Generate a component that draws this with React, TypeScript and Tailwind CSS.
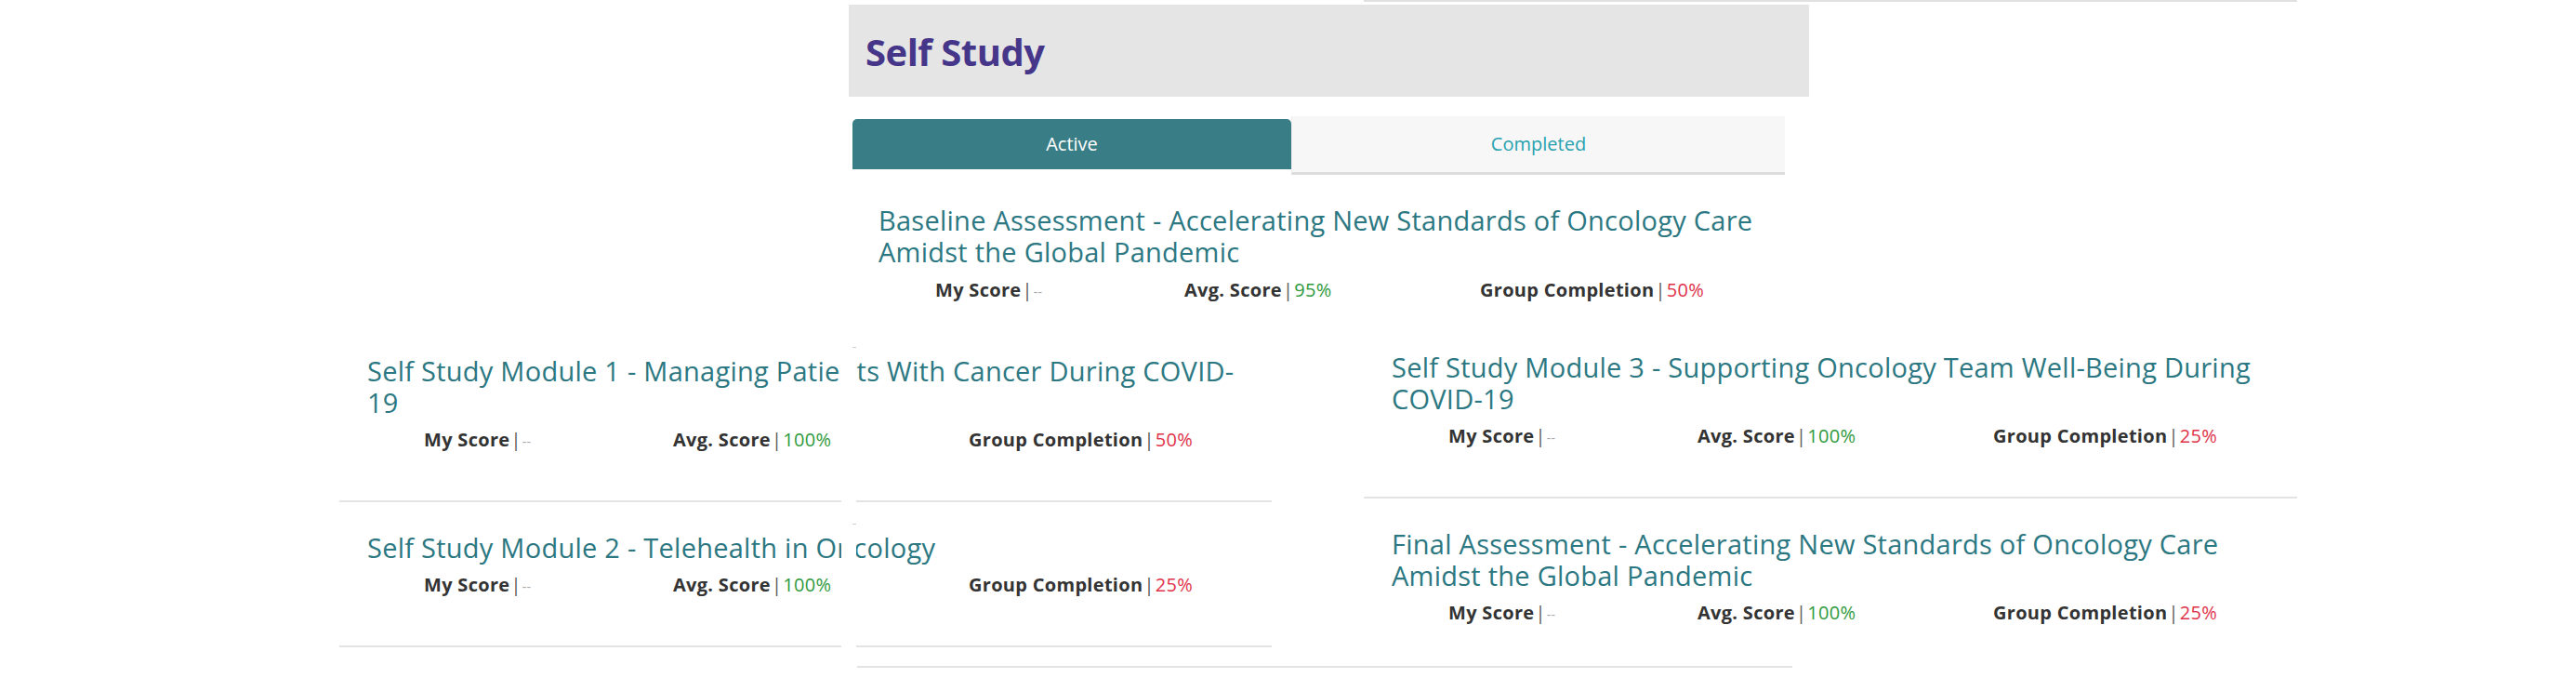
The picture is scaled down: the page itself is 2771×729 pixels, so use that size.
import React from "react";

type Stat = { my: string; avg: string; group: string };

type Course = { lines: string[]; stats: Stat };

const baseline: Course = {
  lines: ["Baseline Assessment - Accelerating New Standards of Oncology Care", "Amidst the Global Pandemic"],
  stats: { my: "--", avg: "95%", group: "50%" },
};

const leftCourses: Course[] = [
  {
    lines: ["Self Study Module 1 - Managing Patients With Cancer During COVID-", "19"],
    stats: { my: "--", avg: "100%", group: "50%" },
  },
  {
    lines: ["Self Study Module 2 - Telehealth in Oncology"],
    stats: { my: "--", avg: "100%", group: "25%" },
  },
];

const rightCourses: Course[] = [
  {
    lines: ["Self Study Module 3 - Supporting Oncology Team Well-Being During", "COVID-19"],
    stats: { my: "--", avg: "100%", group: "25%" },
  },
  {
    lines: ["Final Assessment - Accelerating New Standards of Oncology Care", "Amidst the Global Pandemic"],
    stats: { my: "--", avg: "100%", group: "25%" },
  },
];

function StatItem({ label, value, tone }: { label: string; value: string; tone: "muted" | "green" | "red" }) {
  const color =
    tone === "green" ? "text-[#2f9a3e]" : tone === "red" ? "text-[#e0334a]" : "text-[#a8a8a8] text-[14px]";
  return (
    <span className="flex items-baseline whitespace-nowrap">
      <span className="font-bold text-[#333333]">{label}</span>
      <span className="px-[1px] font-normal text-[#555555]">|</span>
      <span className={`font-normal ${color}`}>{value}</span>
    </span>
  );
}

function StatsRow({ stats }: { stats: Stat }) {
  return (
    <div className="flex items-baseline pl-[61px] font-['Open_Sans',sans-serif] text-[20px] leading-[24px] tracking-[0.3px]">
      <div className="w-[268px]">
        <StatItem label="My Score" value={stats.my} tone="muted" />
      </div>
      <div className="w-[318px]">
        <StatItem label="Avg. Score" value={stats.avg} tone="green" />
      </div>
      <div>
        <StatItem label="Group Completion" value={stats.group} tone="red" />
      </div>
    </div>
  );
}

function Title({ lines }: { lines: string[] }) {
  return (
    <h3 className="font-['Open_Sans',sans-serif] text-[29px] leading-[34px] font-normal tracking-[0.25px] text-[#2c7882]">
      {lines.map((l) => (
        <span key={l} className="block whitespace-nowrap">
          {l}
        </span>
      ))}
    </h3>
  );
}

function CourseCard({ course, border = true }: { course: Course; border?: boolean }) {
  return (
    <div className={`px-[30px] pt-[32px] pb-[51px] ${border ? "border-b-2 border-[#e3e3e3]" : ""}`}>
      <Title lines={course.lines} />
      <div className="mt-[11px]">
        <StatsRow stats={course.stats} />
      </div>
    </div>
  );
}

export default function App() {
  return (
    <div className="flex h-[729px] w-[2771px] flex-col overflow-hidden bg-white">
      {/* border of the card above, right column */}
      <div className="ml-[1467px] h-[2px] w-[1004px] shrink-0 bg-[#e1e1e1]" />

      {/* centre column: header, tabs, baseline */}
      <div className="ml-[913px] mt-[3px] w-[1033px] shrink-0">
        <div className="h-[99px] bg-[#e5e5e5] pl-[18px] pt-[31px]">
          <h1 className="font-['Open_Sans',sans-serif] text-[40px] leading-[40px] font-bold tracking-[-0.5px] text-[#45368a]">
            Self Study
          </h1>
        </div>

        <div className="ml-[4px] mt-[21px] flex items-start font-['Open_Sans',sans-serif] text-[20px]">
          <div className="mt-[3px] flex h-[54px] w-[472px] items-center justify-center rounded-t-[5px] bg-[#397d86] text-white">
            Active
          </div>
          <div className="flex h-[63px] w-[531px] items-center justify-center border-b-[3px] border-l border-b-[#dcdcdc] border-l-[#ececec] bg-[#f7f7f7] text-[#26a1b0]">
            Completed
          </div>
        </div>

        <div className="px-[32px] pt-[32px]">
          <Title lines={baseline.lines} />
          <div className="mt-[12px]">
            <StatsRow stats={baseline.stats} />
          </div>
        </div>
      </div>

      {/* lower row: module 1 + 2 on the left, module 3 + final on the right */}
      <div className="mt-[20px] flex shrink-0 items-start">
        <div className="relative ml-[365px] mt-[4px] w-[1003px] shrink-0 bg-white">
          {leftCourses.map((c, i) => (
            <CourseCard key={i} course={c} />
          ))}
          {/* white gap between the two captures */}
          <div className="absolute bottom-0 left-[540px] top-0 w-[16px] bg-white">
            <div className="absolute left-[12px] top-[23px] h-px w-[4px] bg-[#cfcfcf]" />
            <div className="absolute left-[12px] top-[213px] h-px w-[4px] bg-[#cfcfcf]" />
          </div>
          <div className="ml-[557px] mt-[20px] h-[2px] w-[1006px] bg-[#e3e3e3]" />
        </div>

        <div className="ml-[99px] w-[1004px] shrink-0">
          {rightCourses.map((c, i) => (
            <CourseCard key={i} course={c} border={i < rightCourses.length - 1} />
          ))}
        </div>
      </div>
    </div>
  );
}
